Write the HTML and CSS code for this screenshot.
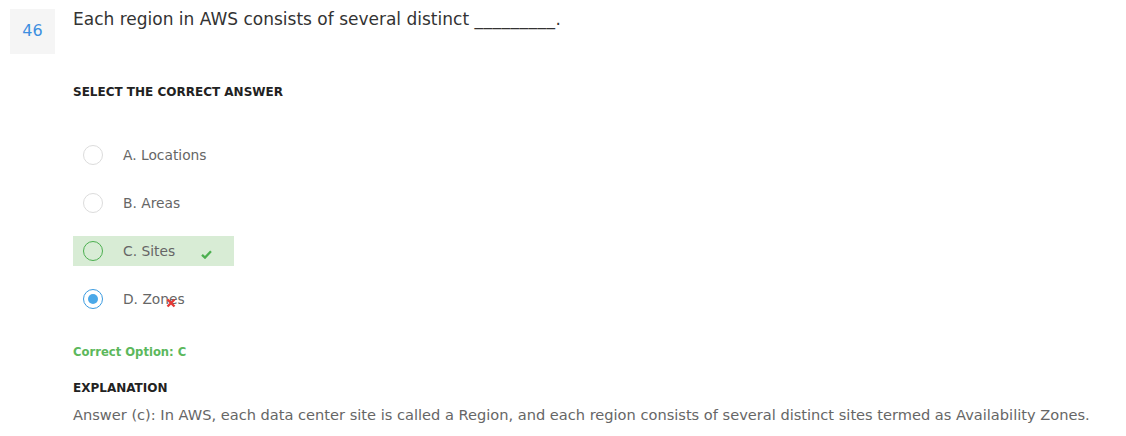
FILE: index.html
```html
<!DOCTYPE html>
<html>
<head>
<meta charset="utf-8">
<link rel="stylesheet" href="styles.css">
</head>
<body>
<div class="question">
  <div class="qnum">46</div>
  <div class="qbody">
    <div class="qtext">Each region in AWS consists of several distinct <span class="blank">_________</span>.</div>
    <div class="label select-label">SELECT THE CORRECT ANSWER</div>
    <ul class="options">
      <li class="option"><span class="radio"></span><span class="opt-text">A. Locations</span></li>
      <li class="option"><span class="radio"></span><span class="opt-text">B. Areas</span></li>
      <li class="option correct"><span class="radio"></span><span class="opt-text">C. Sites</span>
        <svg class="check" width="11" height="9" viewBox="0 0 11 9"><path d="M1 4.8 L4 7.6 L10 1.2" fill="none" stroke="#4caf50" stroke-width="2.3"/></svg>
      </li>
      <li class="option chosen"><span class="radio"><span class="dot"></span></span><span class="opt-text">D. Zones<svg class="cross" width="10" height="10" viewBox="0 0 10 10"><path d="M1.5 1.5 L8.5 8.5 M8.5 1.5 L1.5 8.5" stroke="#e53935" stroke-width="2.4"/></svg></span></li>
    </ul>
    <div class="correct-opt">Correct Option: C</div>
    <div class="label expl-label">EXPLANATION</div>
    <div class="expl">Answer (c): In AWS, each data center site is called a Region, and each region consists of several distinct sites termed as Availability Zones.</div>
  </div>
</div>
</body>
</html>
```
FILE: styles.css
```css
* { box-sizing: border-box; }
body {
  margin: 0;
  background: #fff;
  font-family: "DejaVu Sans", "Liberation Sans", sans-serif;
}
.question {
  display: flex;
  padding: 9px 0 0 10px;
}
.qnum {
  width: 45px;
  height: 45px;
  background: #f5f5f5;
  color: #3d8fe0;
  font-size: 16px;
  display: flex;
  align-items: center;
  justify-content: center;
  padding-bottom: 2px;
  flex-shrink: 0;
}
.qbody {
  margin-left: 18px;
}
.qtext {
  font-size: 17px;
  color: #333;
  line-height: 22px;
  margin-top: -1px;
}
.blank {
  letter-spacing: 0.5px;
}
.label {
  font-size: 12px;
  line-height: 16px;
  font-weight: 700;
  color: #222;
}
.select-label {
  margin-top: 54px;
}
.options {
  list-style: none;
  margin: 40px 0 0 0;
  padding: 0;
  display: flex;
  flex-direction: column;
  gap: 18px;
}
.option {
  display: flex;
  align-items: center;
  height: 30px;
  width: 161px;
  padding-left: 10px;
}
.radio {
  width: 20px;
  height: 20px;
  border-radius: 50%;
  border: 1px solid #dcdcdc;
  background: #fff;
  display: flex;
  align-items: center;
  justify-content: center;
  flex-shrink: 0;
}
.opt-text {
  margin-left: 20px;
  font-size: 13.8px;
  line-height: 16px;
  color: #666;
  position: relative;
}
.option.correct {
  background: #d8ecd5;
}
.option.correct .radio {
  border-color: #4caf50;
  background: transparent;
}
.check {
  margin-left: auto;
  margin-right: 22px;
  margin-top: 6px;
}
.option.chosen .radio {
  border-color: #3b9be0;
}
.dot {
  width: 10px;
  height: 10px;
  border-radius: 50%;
  background: #4aa8e8;
}
.cross {
  position: absolute;
  left: 43px;
  top: 7px;
}
.correct-opt {
  margin-top: 30px;
  font-size: 11.6px;
  line-height: 16px;
  font-weight: 700;
  color: #5cb85c;
}
.expl-label {
  margin-top: 20px;
}
.expl {
  margin-top: 9px;
  font-size: 14.6px;
  line-height: 20px;
  color: #666;
}
```
